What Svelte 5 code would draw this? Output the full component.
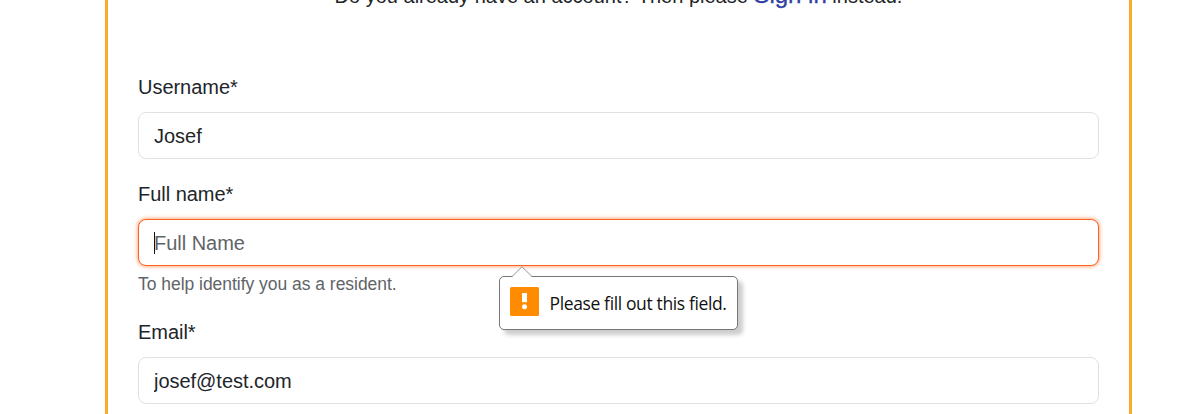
<script>
  let username = $state('Josef');
  let fullName = $state('');
  let email = $state('josef@test.com');
</script>

<main class="card">
  <p class="intro">Do you already have an account? Then please <a href="#signin">Sign in</a> instead.</p>

  <form novalidate>
    <div class="field">
      <label for="username">Username*</label>
      <input id="username" type="text" bind:value={username} />
    </div>

    <div class="field">
      <label for="fullname">Full name*</label>
      <div class="control">
        <input id="fullname" class="active" type="text" placeholder="Full Name" bind:value={fullName} />
        <span class="caret"></span>
        <div class="bubble" role="alert">
          <svg class="arrow" width="20" height="11" viewBox="0 0 20 11">
            <path d="M0 11 10 .8 20 11Z" fill="#fff" />
            <path d="M0 10.5 10 .8 20 10.5" fill="none" stroke="#959595" />
          </svg>
          <svg class="warn" width="29" height="29" viewBox="0 0 29 29">
            <rect width="29" height="29" rx="1.5" fill="#ff8c00" />
            <path d="M12 6h5v9.2h-5Z" fill="#fff" />
            <circle cx="14.5" cy="19.8" r="2.5" fill="#fff" />
          </svg>
          <span class="message">Please fill out this field.</span>
        </div>
      </div>
      <small>To help identify you as a resident.</small>
    </div>

    <div class="field">
      <label for="email">Email*</label>
      <input id="email" type="email" bind:value={email} />
    </div>
  </form>
</main>

<style>
  :global(body) {
    background: #fff;
    overflow: hidden;
  }
  .card {
    box-sizing: border-box;
    width: 1027px;
    height: 414px;
    margin-left: 105px;
    padding: 0 30px;
    border: solid #f9ae2b;
    border-width: 0 3px;
    overflow: hidden;
    font: 20px/30px "Liberation Sans", Arial, sans-serif;
    letter-spacing: -0.03px;
    color: #212529;
  }
  .intro {
    height: 36px;
    margin: -23px 0 59px;
    line-height: 36px;
    letter-spacing: 0;
    text-align: center;
    white-space: nowrap;
  }
  .intro a {
    font-size: 24px;
    color: #303f9f;
    text-decoration: none;
    -webkit-text-stroke: 0.3px #303f9f;
  }
  .field {
    margin-bottom: 20px;
  }
  label {
    display: block;
    height: 30px;
    margin-bottom: 10px;
  }
  input {
    display: block;
    box-sizing: border-box;
    width: 961px;
    height: 47px;
    padding: 2px 15px 0;
    border: 1px solid #dee2e6;
    border-radius: 8px;
    outline: none;
    background: #fff;
    font: inherit;
    letter-spacing: inherit;
    color: #212529;
  }
  input::placeholder {
    color: #5f6468;
    opacity: 1;
  }
  input.active {
    border-color: #fa651e;
    box-shadow: 0 0 4px rgba(250, 101, 30, 0.8);
  }
  .control {
    position: relative;
  }
  .caret {
    position: absolute;
    left: 16px;
    top: 13px;
    width: 1px;
    height: 22px;
    background: #111;
  }
  small {
    display: block;
    height: 26px;
    margin-top: 5px;
    font-size: 17.5px;
    line-height: 26px;
    color: #5f6468;
  }
  .bubble {
    position: absolute;
    left: 361px;
    top: 57px;
    display: flex;
    align-items: center;
    gap: 10.5px;
    box-sizing: border-box;
    width: 239px;
    height: 54px;
    padding: 0 10px;
    border: 1px solid #767676;
    border-radius: 5px;
    background: #fff;
    box-shadow: 5px 5px 4px rgba(0, 0, 0, 0.2);
    color: #111;
    white-space: nowrap;
  }
  .arrow {
    position: absolute;
    left: 12px;
    top: -11px;
  }
  .warn {
    flex: none;
    margin-top: -4px;
  }
  .message {
    font: 17.5px/24px "Open Sans", "Noto Sans", sans-serif;
    letter-spacing: -0.37px;
  }
</style>
